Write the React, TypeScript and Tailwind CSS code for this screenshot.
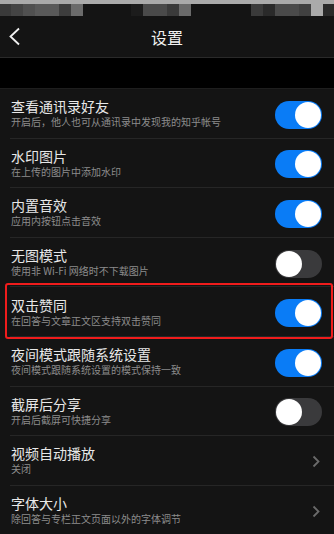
import React from "react";

type Item = { title: string; sub: string; kind: "on" | "off" | "arrow" };

const items: Item[] = [
  { title: "查看通讯录好友", sub: "开启后，他人也可从通讯录中发现我的知乎帐号", kind: "on" },
  { title: "水印图片", sub: "在上传的图片中添加水印", kind: "on" },
  { title: "内置音效", sub: "应用内按钮点击音效", kind: "on" },
  { title: "无图模式", sub: "使用非 Wi-Fi 网络时不下载图片", kind: "off" },
  { title: "双击赞同", sub: "在回答与文章正文区支持双击赞同", kind: "on" },
  { title: "夜间模式跟随系统设置", sub: "夜间模式跟随系统设置的模式保持一致", kind: "on" },
  { title: "截屏后分享", sub: "开启后截屏可快捷分享", kind: "off" },
  { title: "视频自动播放", sub: "关闭", kind: "arrow" },
  { title: "字体大小", sub: "除回答与专栏正文页面以外的字体调节", kind: "arrow" },
];

const blocks: [number, string][] = [
  [11, "#3a3a3a"], [12, "#444444"], [12, "#505050"], [24, "#595959"], [12, "#3d3d3d"], [12, "#6b6b6b"],
  [48, "#141414"], [12, "#1c1c1c"], [24, "#4a4a4a"], [12, "#3a3a3a"], [12, "#6a6a6a"], [60, "#141414"],
  [12, "#3a3a3a"], [12, "#2a2a2a"], [24, "#4a4a4a"], [12, "#404040"], [12, "#aaaaaa"], [11, "#2a2a2a"],
];

function Toggle({ on }: { on: boolean }) {
  return on ? (
    <div className="w-[47px] h-[28px] rounded-full bg-[#0a7cf6] flex items-center justify-end pr-[1px]">
      <div className="w-[26px] h-[26px] rounded-full bg-white" />
    </div>
  ) : (
    <div className="w-[47px] h-[28px] rounded-full bg-[#3a3a3c] flex items-center justify-start pl-[1px]">
      <div className="w-[26px] h-[26px] rounded-full bg-white" />
    </div>
  );
}

export default function App() {
  return (
    <div
      className="w-[334px] h-[534px] overflow-hidden bg-black relative"
      style={{ fontFamily: '"Noto Sans CJK SC", "Noto Sans", sans-serif' }}
    >
      <div className="h-[4px] bg-[#aaaaaa]" />
      <div className="h-[12px] flex">
        {blocks.map(([w, c], i) => (
          <div key={i} className="h-full" style={{ width: w, background: c }} />
        ))}
      </div>
      <div className="h-[42px] bg-[#141414] border-b border-[#2a2a2a] relative flex items-center justify-center">
        <svg className="absolute left-[8px] top-[11px]" width="14" height="19" viewBox="0 0 14 19">
          <polyline points="11,1.5 2.5,9.5 11,17.5" fill="none" stroke="#f0f0f0" strokeWidth="1.8" />
        </svg>
        <span className="text-[16px] leading-[20px] text-[#f2f2f2]">设置</span>
      </div>
      <div className="h-[31px] bg-black border-b border-[#1e1e1e]" />
      <div className="bg-[#141414]">
        {items.map((it, i) => (
          <div key={i} className="h-[49.6px] pl-[10px]">
            <div className="h-full border-b border-[#262626] flex items-center pl-[1px] pr-[12px]">
              <div className="flex-1 flex flex-col">
                <span className="text-[14px] leading-[18px] text-[#e8e8e8]">{it.title}</span>
                <span className="text-[10px] leading-[14px] text-[#8c8c8c]">{it.sub}</span>
              </div>
              {it.kind === "arrow" ? (
                <svg width="8" height="13" viewBox="0 0 8 13" className="mr-[2px] mt-[3px]">
                  <polyline points="1.5,1.5 6.5,6.5 1.5,11.5" fill="none" stroke="#6a6a6a" strokeWidth="1.8" />
                </svg>
              ) : (
                <div className="mt-[3px]">
                  <Toggle on={it.kind === "on"} />
                </div>
              )}
            </div>
          </div>
        ))}
      </div>
      <div className="absolute left-[5px] top-[283px] w-[328px] h-[56px] border-2 border-[#f01c1c] rounded-[3px]" />
    </div>
  );
}
